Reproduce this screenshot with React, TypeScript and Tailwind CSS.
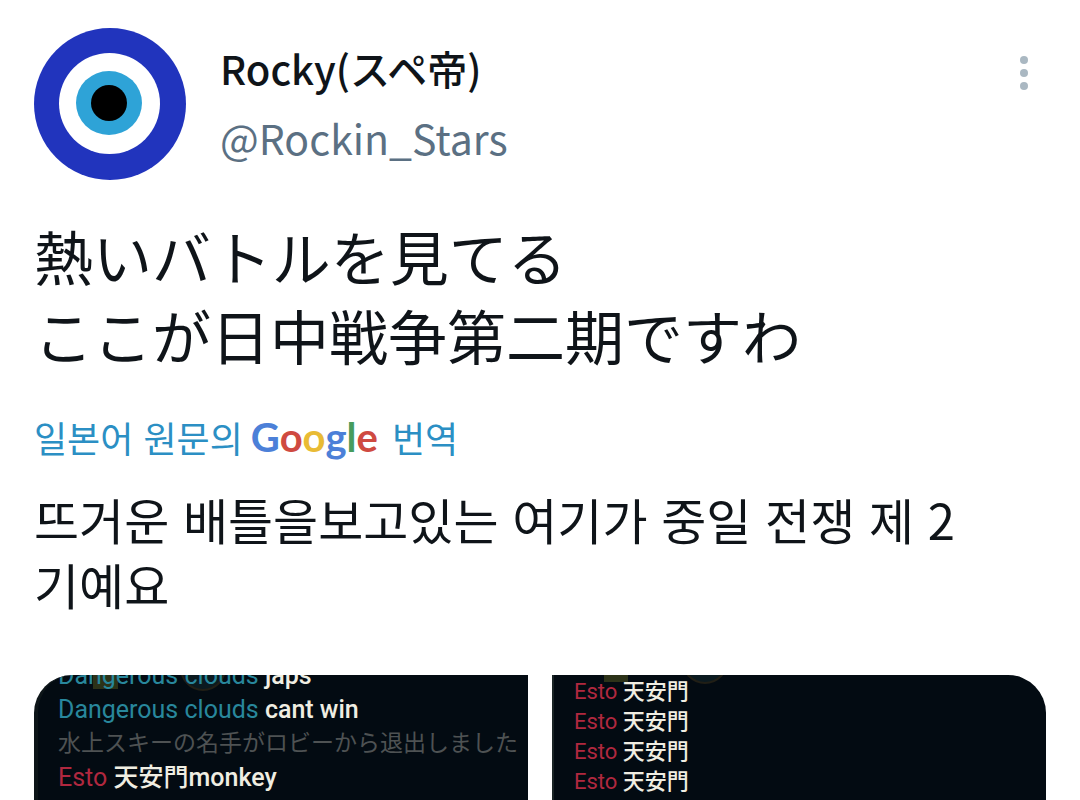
import React from 'react';

interface ChatLine {
    name?: string;
    text: string;
}

const leftChat: ChatLine[] = [
    { name: 'Dangerous clouds', text: 'japs' },
    { name: 'Dangerous clouds', text: 'cant win' },
    { text: '水上スキーの名手がロビーから退出しました' },
    { name: 'Esto', text: '天安門monkey' },
];

const rightChat: ChatLine[] = [
    { name: 'Esto', text: '天安門' },
    { name: 'Esto', text: '天安門' },
    { name: 'Esto', text: '天安門' },
    { name: 'Esto', text: '天安門' },
];

const App: React.FC = () => {
    return (
        <article
            lang="ja"
            className="flex min-h-screen flex-col overflow-hidden bg-white px-[34px] pt-7 font-['Noto_Sans_CJK_JP',sans-serif] text-[#0f1419]"
        >
            {/* Author */}
            <header className="flex items-start">
                <Avatar />
                <div className="ml-[34px] flex-1 pt-1.5">
                    <h1 className="text-[40px] leading-[69px] font-medium">Rocky(スペ帝)</h1>
                    <p className="text-[41px] leading-[69px] text-[#5b7083]">@Rockin_Stars</p>
                </div>
                <button type="button" aria-label="More" className="mt-6 flex h-[42px] w-11 items-center justify-center">
                    <svg viewBox="0 0 10 34" className="h-[34px] w-[10px]" fill="#aab8c2">
                        <circle cx="5" cy="4" r="4" />
                        <circle cx="5" cy="17" r="4" />
                        <circle cx="5" cy="30" r="4" />
                    </svg>
                </button>
            </header>

            {/* Tweet text */}
            <p className="mt-9 text-[59px] leading-[79px]">
                熱いバトルを見てる
                <br />
                ここが日中戦争第二期ですわ
            </p>

            {/* Translation */}
            <div lang="ko" className="mt-[38px] font-['Noto_Sans_CJK_KR',sans-serif]">
                <a href="#" className="flex items-center text-[36px] leading-[50px] text-[#2b8fc4]">
                    일본어 원문의
                    <GoogleWordmark />
                    번역
                </a>
                <p className="mt-6 text-[49px] leading-[65px]">
                    뜨거운 배틀을보고있는 여기가 중일 전쟁 제 2
                    <br />
                    기예요
                </p>
            </div>

            {/* Media */}
            <div className="mt-[59px] grid flex-1 grid-cols-2 gap-6">
                <div className="relative h-0 min-h-full overflow-hidden rounded-tl-[38px] border-l-4 border-[#0d1518] bg-[#030b12] pl-5">
                    <svg className="absolute top-0 left-0 h-4 w-[200px]" viewBox="0 0 200 16">
                        <rect x="55" width="25" height="14" fill="#2c3218" />
                        <circle cx="165" cy="-7" r="22" fill="#0b1a20" stroke="#211f16" strokeWidth="2" />
                    </svg>
                    <Chat lines={leftChat} className="-mt-4 text-[25px] leading-[34px]" />
                </div>
                <div className="relative h-0 min-h-full overflow-hidden rounded-tr-[38px] border-l-2 border-[#1a2425] bg-[#030b12] pl-5">
                    <svg className="absolute top-0 left-0 h-4 w-[200px]" viewBox="0 0 200 16">
                        <rect x="50" width="24" height="7" fill="#2c3218" />
                        <circle cx="151" cy="-14" r="22" fill="#0b1a20" stroke="#211f16" strokeWidth="2" />
                    </svg>
                    <Chat lines={rightChat} className="pt-0.5 text-[22px] leading-[30px]" />
                </div>
            </div>
        </article>
    );
};

const Avatar: React.FC = () => (
    <svg viewBox="0 0 152 152" className="size-[152px] shrink-0" role="img" aria-label="Rocky">
        <circle cx="76" cy="76" r="76" fill="#2134bd" />
        <circle cx="75.5" cy="75.5" r="50.5" fill="#fff" />
        <ellipse cx="75" cy="75" rx="33" ry="32" fill="#2ea3d7" />
        <circle cx="75" cy="75" r="18" fill="#000" />
    </svg>
);

const GoogleWordmark: React.FC = () => (
    <span className="mr-3.5 ml-2 font-['Lato',sans-serif] text-[40px] font-bold">
        <span className="text-[#4c80d8]">G</span>
        <span className="text-[#cf4a41]">o</span>
        <span className="text-[#e9bb35]">o</span>
        <span className="text-[#4c80d8]">g</span>
        <span className="text-[#479c5d]">l</span>
        <span className="text-[#cf4a41]">e</span>
    </span>
);

const Chat: React.FC<{ lines: ChatLine[]; className: string }> = ({ lines, className }) => (
    <ul className={`relative font-['Roboto','Noto_Sans_CJK_JP',sans-serif] whitespace-nowrap ${className}`}>
        {lines.map((line, i) => (
            <li key={i} className={line.name ? 'font-medium text-[#f0eee2]' : 'text-[23px] text-[#4e5253]'}>
                {line.name && (
                    <span className={line.name === 'Esto' ? 'font-normal text-[#b0283f]' : 'font-normal text-[#28879c]'}>
                        {line.name}{' '}
                    </span>
                )}
                {line.text}
            </li>
        ))}
    </ul>
);

export default App;
